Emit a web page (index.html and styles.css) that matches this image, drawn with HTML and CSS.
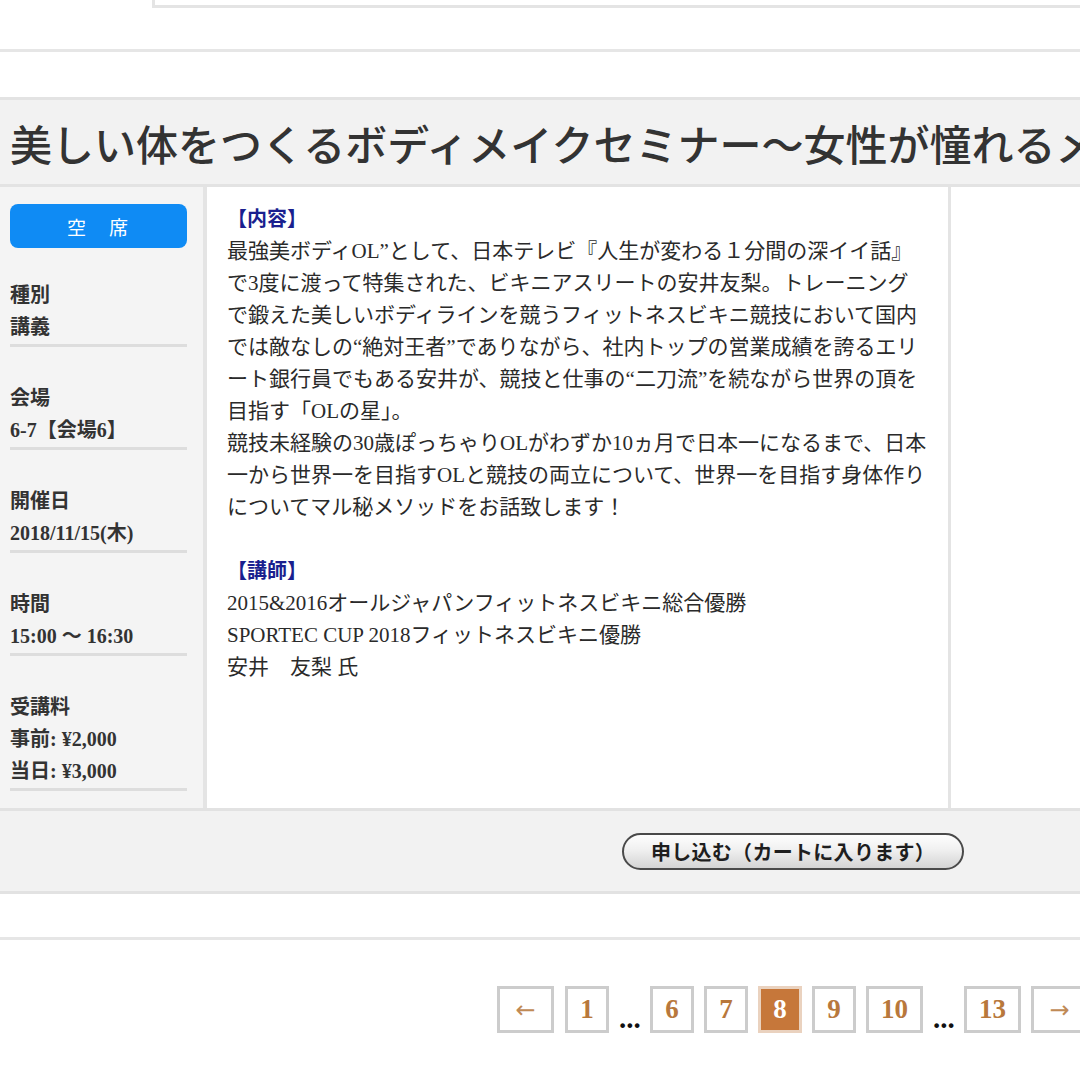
FILE: index.html
```html
<!DOCTYPE html>
<html lang="ja">
<head>
<meta charset="utf-8">
<title>セミナー</title>
<link rel="stylesheet" href="styles.css">
</head>
<body>
<div class="page">
  <div class="prev-box"></div>
  <div class="rule rule-top"></div>

  <section class="seminar">
    <h1 class="seminar-title">美しい体をつくるボディメイクセミナー〜女性が憧れるメ</h1>
    <div class="seminar-body">
      <aside class="info">
        <div class="status">空　席</div>
        <dl class="info-group">
          <dt>種別</dt>
          <dd>講義</dd>
        </dl>
        <dl class="info-group">
          <dt>会場</dt>
          <dd>6-7【会場6】</dd>
        </dl>
        <dl class="info-group">
          <dt>開催日</dt>
          <dd>2018/11/15(木)</dd>
        </dl>
        <dl class="info-group">
          <dt>時間</dt>
          <dd>15:00 〜 16:30</dd>
        </dl>
        <dl class="info-group">
          <dt>受講料</dt>
          <dd>事前: ¥2,000</dd>
          <dd>当日: ¥3,000</dd>
        </dl>
      </aside>
      <div class="detail">
        <p class="heading">【内容】</p>
        <p class="text">最強美ボディOL”として、日本テレビ『人生が変わる１分間の深イイ話』<br>で3度に渡って特集された、ビキニアスリートの安井友梨。トレーニング<br>で鍛えた美しいボディラインを競うフィットネスビキニ競技において国内<br>では敵なしの“絶対王者”でありながら、社内トップの営業成績を誇るエリ<br>ート銀行員でもある安井が、競技と仕事の“二刀流”を続ながら世界の頂を<br>目指す「OLの星」。<br>競技未経験の30歳ぽっちゃりOLがわずか10ヵ月で日本一になるまで、日本<br>一から世界一を目指すOLと競技の両立について、世界一を目指す身体作り<br>についてマル秘メソッドをお話致します！</p>
        <p class="heading heading-gap">【講師】</p>
        <p class="text">2015&amp;2016オールジャパンフィットネスビキニ総合優勝<br>SPORTEC CUP 2018フィットネスビキニ優勝<br>安井　友梨 氏</p>
      </div>
      <div class="extra"></div>
    </div>
    <div class="actions">
      <button class="apply" type="button">申し込む（カートに入ります）</button>
    </div>
  </section>

  <div class="rule rule-bottom"></div>

  <nav class="pager">
    <a class="page-link arrow">←</a>
    <a class="page-link">1</a>
    <span class="dots">...</span>
    <a class="page-link">6</a>
    <a class="page-link">7</a>
    <a class="page-link current">8</a>
    <a class="page-link">9</a>
    <a class="page-link">10</a>
    <span class="dots">...</span>
    <a class="page-link">13</a>
    <a class="page-link arrow">→</a>
  </nav>
</div>
</body>
</html>
```

FILE: styles.css
```css
html, body {
  margin: 0;
  padding: 0;
  background: #ffffff;
}

body {
  width: 1080px;
  height: 1080px;
  overflow: hidden;
  font-family: "Liberation Serif", "Noto Sans CJK JP", serif;
  color: #333333;
}

.page {
  width: 1080px;
}

.prev-box {
  margin-left: 152px;
  height: 5px;
  border-left: 3px solid #e4e4e4;
  border-bottom: 3px solid #e4e4e4;
}

.rule {
  border-top: 3px solid #e6e6e6;
}

.rule-top {
  margin-top: 41px;
}

.seminar {
  margin-top: 45px;
  border-top: 3px solid #e3e3e3;
}

.seminar-title {
  margin: 0;
  height: 84px;
  display: flex;
  align-items: center;
  padding-left: 10px;
  background: #f2f2f2;
  border-bottom: 3px solid #e3e3e3;
  font-size: 42px;
  font-weight: 500;
  color: #333333;
  white-space: nowrap;
  overflow: hidden;
}

.seminar-body {
  display: flex;
  height: 621px;
}

.info {
  width: 177px;
  padding: 17px 16px 0 10px;
  background: #f4f4f4;
  border-right: 4px solid #e4e4e4;
}

.status {
  height: 44px;
  border-radius: 8px;
  background: #0f8bf4;
  color: #ffffff;
  display: flex;
  align-items: center;
  justify-content: center;
  font-size: 19px;
  letter-spacing: 2px;
  margin-bottom: 31px;
}

.info-group {
  margin: 0 0 35px 0;
  padding-bottom: 1px;
  border-bottom: 3px solid #dddddd;
  font-size: 20px;
  font-weight: bold;
  line-height: 32px;
  color: #333333;
}

.info-group dt,
.info-group dd {
  margin: 0;
  white-space: nowrap;
}

.detail {
  width: 721px;
  padding: 16px 0 0 20px;
  background: #ffffff;
  border-right: 3px solid #e4e4e4;
}

.detail p {
  margin: 0;
}

.heading {
  font-size: 20px;
  line-height: 32px;
  font-weight: bold;
  color: #1a1f8f;
}

.heading-gap {
  margin-top: 32px !important;
}

.text {
  font-size: 21px;
  line-height: 32px;
  color: #2a2a2a;
  white-space: nowrap;
}

.extra {
  flex: 1;
  background: #ffffff;
}

.actions {
  height: 80px;
  display: flex;
  align-items: center;
  padding-left: 622px;
  background: #f2f2f2;
  border-top: 3px solid #e2e2e2;
  border-bottom: 3px solid #e2e2e2;
}

.apply {
  width: 342px;
  height: 37px;
  border: 2px solid #4a4a4a;
  border-radius: 19px;
  background: linear-gradient(#fefefe 0%, #f0f0f0 45%, #d4d4d4 100%);
  font-family: "Noto Sans CJK JP", sans-serif;
  font-size: 20px;
  font-weight: bold;
  color: #1e1e1e;
  padding: 0;
  letter-spacing: 0.3px;
}

.rule-bottom {
  margin-top: 43px;
}

.pager {
  margin-top: 46px;
  margin-left: 497px;
  display: flex;
  align-items: flex-end;
  gap: 10px;
  white-space: nowrap;
}

.page-link {
  box-sizing: border-box;
  height: 47px;
  min-width: 44px;
  padding: 0 12px;
  border: 3px solid #cccccc;
  background: #ffffff;
  display: flex;
  align-items: center;
  justify-content: center;
  font-family: "Liberation Serif", serif;
  font-size: 27px;
  font-weight: bold;
  color: #b8783c;
  flex-shrink: 0;
}

.page-link.arrow {
  width: 57px;
  font-family: "DejaVu Sans", sans-serif;
  font-weight: normal;
  font-size: 24px;
  color: #c08a55;
}

.page-link.arrow:first-child {
  margin-right: 1px;
}

.page-link.current {
  background: #c6773a;
  border-color: #ead2bf;
  color: #ffffff;
}

.dots {
  width: 21px;
  text-align: center;
  font-family: "Liberation Serif", serif;
  font-size: 29px;
  font-weight: bold;
  color: #111111;
  line-height: 1;
  margin-bottom: 0;
}
```
